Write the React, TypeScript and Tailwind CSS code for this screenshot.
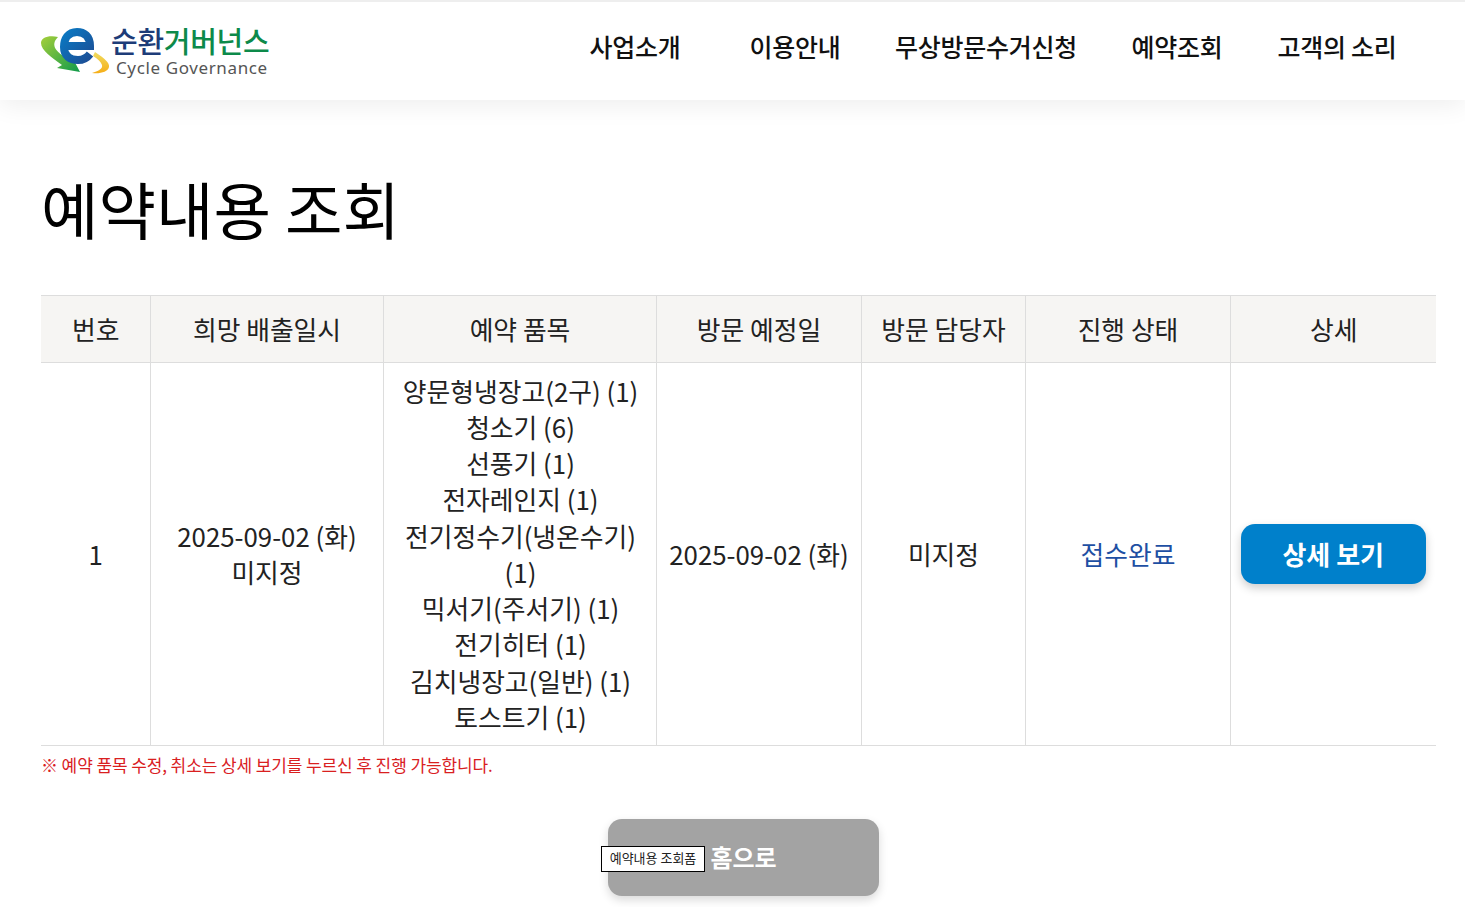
const KR = "font-['Noto_Sans_CJK_KR','Noto_Sans',sans-serif]";

const navItems = ["사업소개", "이용안내", "무상방문수거신청", "예약조회", "고객의 소리"];
const columns = [
  { label: "번호", width: "w-[109px]" },
  { label: "희망 배출일시", width: "w-[233px]" },
  { label: "예약 품목", width: "w-[273px]" },
  { label: "방문 예정일", width: "w-[205px]" },
  { label: "방문 담당자", width: "w-[164px]" },
  { label: "진행 상태", width: "w-[205px]" },
  { label: "상세", width: "w-[206px]" },
];
const items = [
  "양문형냉장고(2구) (1)",
  "청소기 (6)",
  "선풍기 (1)",
  "전자레인지 (1)",
  "전기정수기(냉온수기) (1)",
  "믹서기(주서기) (1)",
  "전기히터 (1)",
  "김치냉장고(일반) (1)",
  "토스트기 (1)",
];

function LogoMark() {
  return (
    <svg width="70" height="50" viewBox="0 0 70 50" className="shrink-0">
      <defs>
        <linearGradient id="blue" x1="0" y1="0" x2="1" y2="1">
          <stop offset="0" stopColor="#0a78c2" />
          <stop offset="1" stopColor="#1c4f96" />
        </linearGradient>
        <linearGradient id="green" x1="0" y1="0" x2="1" y2="1">
          <stop offset="0" stopColor="#a5cf3a" />
          <stop offset="1" stopColor="#0f9a4a" />
        </linearGradient>
        <linearGradient id="yellow" x1="0" y1="0" x2="0" y2="1">
          <stop offset="0" stopColor="#f0dc60" />
          <stop offset="1" stopColor="#f6ae18" />
        </linearGradient>
      </defs>
      <path d="M18 11C8 9 1 12 1 17C1 24 12 32 22 39L17 42L40 46L30 27L27 32C18 27 9 20 18 11Z" fill="url(#green)" />
      <path d="M55 26C64 32 70 37 69 41C68 46 60 48 52 47C58 45 63 43 62 39C61 36 58 33 53 30Z" fill="url(#yellow)" />
      <path d="M25 20H50C50 10 44 6 37 6C28 6 24 13 24 21C24 30 30 34 38 34C43 34 47 32 50 28" fill="none" stroke="url(#blue)" strokeWidth="8" />
    </svg>
  );
}

export default function App() {
  return (
    <div className={`${KR} min-h-[907px] bg-white text-black`}>
      <header className="flex h-[100px] items-center justify-between border-t-2 border-[#eeeeee] bg-white pl-[40px] pr-[48px] shadow-[0_5px_24px_rgba(0,0,0,0.07)]">
        <div className="flex items-center">
          <LogoMark />
          <div className="ml-[1px] mt-[1px]">
            <div className="text-[29px] font-medium leading-[30px] tracking-[-0.3px] text-[#0d8a4a]">
              <span className="text-[#1d3c78]">순환</span>거버넌스
            </div>
            <div className="ml-[5px] mt-[3px] font-['Noto_Sans',sans-serif] text-[17px] leading-[20px] tracking-[0.62px] text-[#555555]">
              Cycle Governance
            </div>
          </div>
        </div>
        <nav className="mb-[10px] flex">
          {navItems.map((item) => (
            <a key={item} className="min-w-[160px] px-[20px] text-center text-[25px] font-medium leading-[40px] tracking-[-0.25px] text-[#111111]">
              {item}
            </a>
          ))}
        </nav>
      </header>

      <main className="pl-[41px] pr-[29px]">
        <h1 className="pb-[46px] pt-[66px] text-[62.5px] font-normal leading-[83px]">예약내용 조회</h1>

        <table className="w-[1395px] table-fixed border-collapse border-y border-[#dddddd] text-center text-[25.8px] leading-[36.25px] text-[#222222]">
          <thead>
            <tr className="h-[67px] border-b border-[#dddddd] bg-[#f6f5f3]">
              {columns.map((col, i) => (
                <th key={col.label} className={`${col.width} pl-[1px] font-normal ${i > 0 ? "border-l border-[#dddddd]" : ""}`}>
                  {col.label}
                </th>
              ))}
            </tr>
          </thead>
          <tbody>
            <tr>
              <td className="pl-[1px]">1</td>
              <td className="border-l border-[#dddddd] pl-[1px]">
                2025-09-02 (화)
                <br />
                미지정
              </td>
              <td className="border-l border-[#dddddd] py-[9.5px] pl-[11px] pr-[9px]">
                {items.map((item) => (
                  <div key={item}>{item}</div>
                ))}
              </td>
              <td className="border-l border-[#dddddd] pl-[1px]">2025-09-02 (화)</td>
              <td className="border-l border-[#dddddd] pl-[1px]">미지정</td>
              <td className="border-l border-[#dddddd] pl-[1px] text-[#1e4fa3]">접수완료</td>
              <td className="border-l border-[#dddddd] px-[10px]">
                <button className="h-[60px] w-full rounded-[14px] bg-[#0080cb] text-[26px] font-bold text-white shadow-[0_4px_10px_rgba(0,0,0,0.2)]">
                  상세 보기
                </button>
              </td>
            </tr>
          </tbody>
        </table>

        <p className="mt-[8px] text-[17px] leading-[22px] tracking-[-0.1px] text-[#d9201f]">
          ※ 예약 품목 수정, 취소는 상세 보기를 누르신 후 진행 가능합니다.
        </p>

        <div className="mt-[43px] flex justify-center pl-[10px]">
          <button className="relative h-[77px] w-[271px] rounded-[14px] bg-[#a3a3a3] text-[24px] font-bold text-white shadow-[0_4px_10px_rgba(0,0,0,0.15)]">
            <span className="absolute left-[-7px] top-[27px] h-[26px] w-[104px] border border-black bg-white text-[13px] font-normal leading-[22px] text-[#222222]">
              예약내용 조회폼
            </span>
            홈으로
          </button>
        </div>
      </main>
    </div>
  );
}
